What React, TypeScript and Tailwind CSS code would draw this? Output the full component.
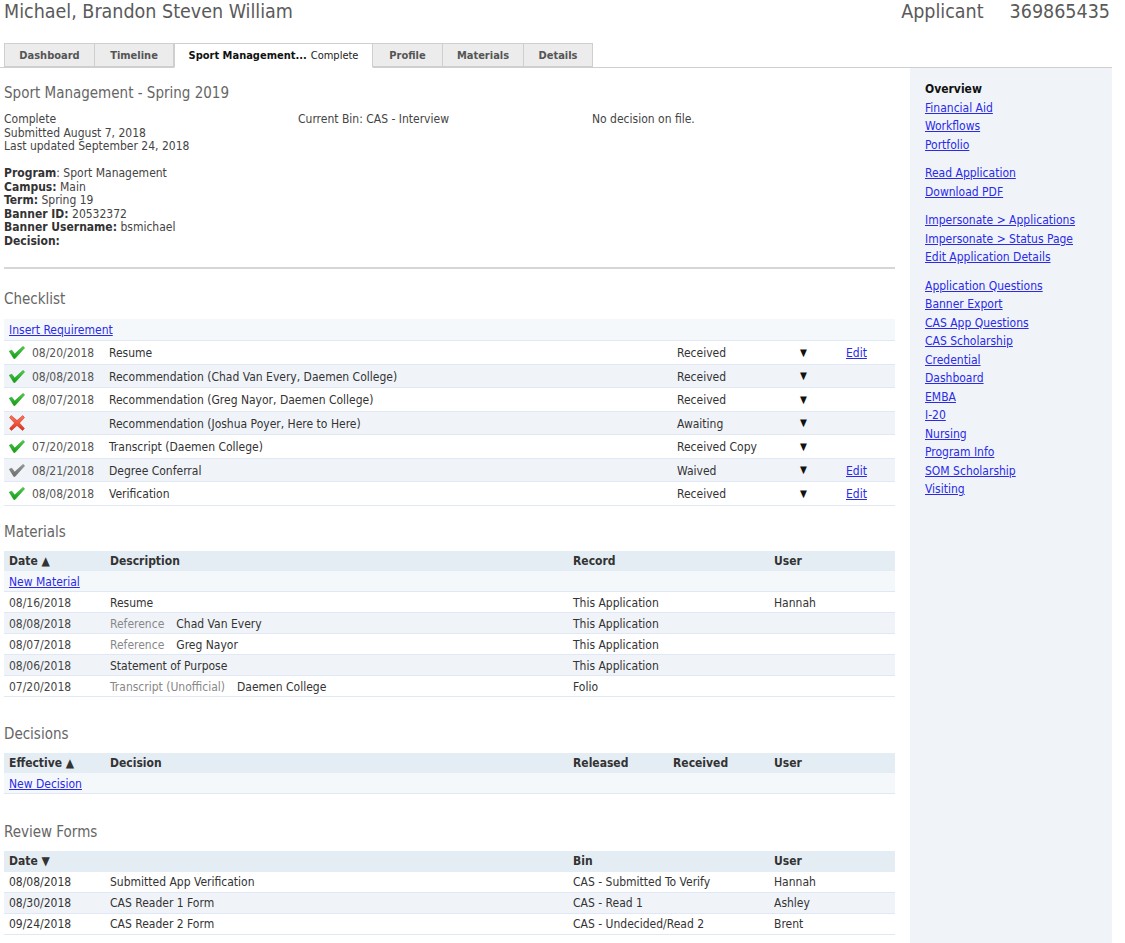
import React from "react";

const FONT = "font-['DejaVu_Sans_Condensed','Liberation_Sans',sans-serif]";
const LINK = "text-[#2a2ae8] underline";

function Check({ gray = false }: { gray?: boolean }) {
  const id = gray ? "gck" : "ck";
  return (
    <svg width="16" height="13" viewBox="0 0 16 13">
      <defs>
        <linearGradient id={id} x1="0" y1="0" x2="0" y2="1">
          <stop offset="0" stopColor={gray ? "#9a9a9a" : "#4cd44c"} />
          <stop offset="1" stopColor={gray ? "#6a6a6a" : "#139a13"} />
        </linearGradient>
      </defs>
      <path
        d="M0.3 5.2 L2.8 4.2 L5.6 8 L14 0.4 L15.6 1.8 L6 12.6 L4.8 12.6 Z"
        fill={`url(#${id})`}
        stroke={gray ? "#666" : "#118811"}
        strokeWidth="0.5"
        strokeLinejoin="round"
      />
    </svg>
  );
}

function Cross() {
  return (
    <svg width="16" height="16" viewBox="0 0 16 16">
      <defs>
        <linearGradient id="rx" x1="0" y1="0" x2="0" y2="1">
          <stop offset="0" stopColor="#ff7a5c" />
          <stop offset="1" stopColor="#e0301c" />
        </linearGradient>
      </defs>
      <path
        d="M2.2 0.6 L8 5.6 L13.8 0.6 L15.4 2.6 L10.4 8 L15.4 13.4 L13.6 15.4 L8 10.4 L2.4 15.4 L0.6 13.4 L5.6 8 L0.6 2.6 Z"
        fill="url(#rx)"
        stroke="#c8301c"
        strokeWidth="0.6"
        strokeLinejoin="round"
      />
    </svg>
  );
}

const checklist = [
  { icon: "g", date: "08/20/2018", desc: "Resume", status: "Received", edit: true },
  { icon: "g", date: "08/08/2018", desc: "Recommendation (Chad Van Every, Daemen College)", status: "Received", edit: false },
  { icon: "g", date: "08/07/2018", desc: "Recommendation (Greg Nayor, Daemen College)", status: "Received", edit: false },
  { icon: "x", date: "", desc: "Recommendation (Joshua Poyer, Here to Here)", status: "Awaiting", edit: false },
  { icon: "g", date: "07/20/2018", desc: "Transcript (Daemen College)", status: "Received Copy", edit: false },
  { icon: "k", date: "08/21/2018", desc: "Degree Conferral", status: "Waived", edit: true },
  { icon: "g", date: "08/08/2018", desc: "Verification", status: "Received", edit: true },
];

const materials = [
  { date: "08/16/2018", type: "", desc: "Resume", record: "This Application", user: "Hannah" },
  { date: "08/08/2018", type: "Reference", desc: "Chad Van Every", record: "This Application", user: "" },
  { date: "08/07/2018", type: "Reference", desc: "Greg Nayor", record: "This Application", user: "" },
  { date: "08/06/2018", type: "", desc: "Statement of Purpose", record: "This Application", user: "" },
  { date: "07/20/2018", type: "Transcript (Unofficial)", desc: "Daemen College", record: "Folio", user: "" },
];

const reviews = [
  { date: "08/08/2018", desc: "Submitted App Verification", bin: "CAS - Submitted To Verify", user: "Hannah" },
  { date: "08/30/2018", desc: "CAS Reader 1 Form", bin: "CAS - Read 1", user: "Ashley" },
  { date: "09/24/2018", desc: "CAS Reader 2 Form", bin: "CAS - Undecided/Read 2", user: "Brent" },
];

const sideGroups: string[][] = [
  ["Financial Aid", "Workflows", "Portfolio"],
  ["Read Application", "Download PDF"],
  ["Impersonate > Applications", "Impersonate > Status Page", "Edit Application Details"],
  [
    "Application Questions",
    "Banner Export",
    "CAS App Questions",
    "CAS Scholarship",
    "Credential",
    "Dashboard",
    "EMBA",
    "I-20",
    "Nursing",
    "Program Info",
    "SOM Scholarship",
    "Visiting",
  ],
];

const tabs = [
  { label: "Dashboard", w: "w-[91px]" },
  { label: "Timeline", w: "w-[79px]" },
  { label: "Sport", w: "w-[199px]", active: true },
  { label: "Profile", w: "w-[70px]" },
  { label: "Materials", w: "w-[81px]" },
  { label: "Details", w: "w-[69px]" },
];

function SectionTitle({ children, mt }: { children: React.ReactNode; mt: string }) {
  return <div className={`${mt} text-[15px] leading-[18px] text-[#666]`}>{children}</div>;
}

export default function App() {
  return (
    <div className={`${FONT} w-[1125px] h-[943px] bg-white overflow-hidden text-[12px] text-[#333]`}>
      <div className="w-[1112px]">
        {/* Header */}
        <div className="h-[43px] flex justify-between items-start pl-[4px] pr-[2px]">
          <div className="text-[19.5px] leading-[23px] text-[#5a5a5a]">Michael, Brandon Steven William</div>
          <div className="flex gap-[26px] text-[19.5px] leading-[23px] text-[#5a5a5a]">
            <span>Applicant</span>
            <span>369865435</span>
          </div>
        </div>

        {/* Tabs */}
        <div className="h-[25px] flex pl-[4px] border-b border-[#cfcfcf]">
          {tabs.map((t) =>
            t.active ? (
              <div
                key={t.label}
                className={`${t.w} h-[25px] bg-white border border-[#cfcfcf] border-b-white flex items-center justify-center gap-[4px] text-[11px] pt-[2px]`}
              >
                <span className="font-bold text-[#111]">Sport Management...</span>
                <span className="text-[#222]">Complete</span>
              </div>
            ) : (
              <div
                key={t.label}
                className={`${t.w} h-[24px] bg-[#ececec] border border-[#cfcfcf] border-l-0 first:border-l flex items-center justify-center text-[11px] font-bold text-[#555] pt-[2px]`}
              >
                {t.label}
              </div>
            )
          )}
        </div>

        {/* Body */}
        <div className="flex">
          {/* Main */}
          <div className="w-[891px] ml-[4px] pt-[16px]">
            <div className="text-[15px] leading-[18px] text-[#666]">Sport Management - Spring 2019</div>
            <div className="mt-[11px] grid grid-cols-[294px_294px_1fr] leading-[13.5px] text-[#444]">
              <div>
                <div>Complete</div>
                <div>Submitted August 7, 2018</div>
                <div>Last updated September 24, 2018</div>
                <div className="h-[13.5px]" />
                <div>
                  <b className="text-[#333]">Program</b>: Sport Management
                </div>
                <div>
                  <b className="text-[#333]">Campus:</b> Main
                </div>
                <div>
                  <b className="text-[#333]">Term:</b> Spring 19
                </div>
                <div>
                  <b className="text-[#333]">Banner ID:</b> 20532372
                </div>
                <div>
                  <b className="text-[#333]">Banner Username:</b> bsmichael
                </div>
                <div>
                  <b className="text-[#333]">Decision:</b>
                </div>
              </div>
              <div>Current Bin: CAS - Interview</div>
              <div>No decision on file.</div>
            </div>
            <div className="mt-[19px] h-[2px] bg-[#d6d6d6]" />

            {/* Checklist */}
            <SectionTitle mt="mt-[21px]">Checklist</SectionTitle>
            <div className="mt-[11px]">
              <div className="h-[22px] bg-[#f4f8fb] border-b border-[#dfe8f4] flex items-center pl-[5px] pt-[1px]">
                <span className={LINK}>Insert Requirement</span>
              </div>
              {checklist.map((r, i) => (
                <div
                  key={i}
                  className={`h-[23.5px] border-b border-[#dfe8f4] grid grid-cols-[23px_77px_568px_123px_46px_1fr] items-center pl-[5px] pt-[2px] ${
                    i % 2 === 1 ? "bg-[#f0f4f9]" : "bg-white"
                  }`}
                >
                  <div className="flex items-center -mt-[1px]">
                    {r.icon === "x" ? <Cross /> : <Check gray={r.icon === "k"} />}
                  </div>
                  <div className="text-[#555]">{r.date}</div>
                  <div>{r.desc}</div>
                  <div>{r.status}</div>
                  <div className="text-[10px] text-[#111] -mt-[2px]">▼</div>
                  <div>{r.edit ? <span className={LINK}>Edit</span> : null}</div>
                </div>
              ))}
            </div>

            {/* Materials */}
            <SectionTitle mt="mt-[17px]">Materials</SectionTitle>
            <div className="mt-[10px]">
              <div className="h-[20px] bg-[#e5edf4] grid grid-cols-[101px_463px_201px_1fr] items-center pl-[5px] font-bold">
                <div>Date ▲</div>
                <div>Description</div>
                <div>Record</div>
                <div>User</div>
              </div>
              <div className="h-[21px] bg-[#f4f8fb] border-b border-[#dfe8f4] flex items-center pl-[5px] pt-[2px]">
                <span className={LINK}>New Material</span>
              </div>
              {materials.map((m, i) => (
                <div
                  key={i}
                  className={`h-[21px] border-b border-[#dfe8f4] grid grid-cols-[101px_463px_201px_1fr] items-center pl-[5px] pt-[2px] ${
                    i % 2 === 1 ? "bg-[#f0f4f9]" : "bg-white"
                  }`}
                >
                  <div className="text-[#444]">{m.date}</div>
                  <div className="flex gap-[12px]">
                    {m.type ? <span className="text-[#888]">{m.type}</span> : null}
                    <span>{m.desc}</span>
                  </div>
                  <div>{m.record}</div>
                  <div>{m.user}</div>
                </div>
              ))}
            </div>

            {/* Decisions */}
            <SectionTitle mt="mt-[28px]">Decisions</SectionTitle>
            <div className="mt-[10px]">
              <div className="h-[20px] bg-[#e5edf4] grid grid-cols-[101px_463px_100px_101px_1fr] items-center pl-[5px] font-bold">
                <div>Effective ▲</div>
                <div>Decision</div>
                <div>Released</div>
                <div>Received</div>
                <div>User</div>
              </div>
              <div className="h-[21px] bg-[#f4f8fb] border-b border-[#dfe8f4] flex items-center pl-[5px] pt-[2px]">
                <span className={LINK}>New Decision</span>
              </div>
            </div>

            {/* Review Forms */}
            <SectionTitle mt="mt-[29px]">Review Forms</SectionTitle>
            <div className="mt-[10px]">
              <div className="h-[21px] bg-[#e5edf4] grid grid-cols-[101px_463px_201px_1fr] items-center pl-[5px] font-bold">
                <div>Date ▼</div>
                <div></div>
                <div>Bin</div>
                <div>User</div>
              </div>
              {reviews.map((r, i) => (
                <div
                  key={i}
                  className={`h-[21px] border-b border-[#dfe8f4] grid grid-cols-[101px_463px_201px_1fr] items-center pl-[5px] pt-[1px] ${
                    i % 2 === 1 ? "bg-[#f0f4f9]" : "bg-white"
                  }`}
                >
                  <div>{r.date}</div>
                  <div>{r.desc}</div>
                  <div>{r.bin}</div>
                  <div>{r.user}</div>
                </div>
              ))}
            </div>
          </div>

          {/* Sidebar */}
          <div className="ml-[15px] w-[202px] h-[875px] bg-[#f0f4f8] pl-[15px] pt-[12px] leading-[18.5px]">
            <div className="font-bold text-[#111]">Overview</div>
            <div className="flex flex-col gap-[10px]">
              {sideGroups.map((g, gi) => (
                <div key={gi} className="flex flex-col">
                  {g.map((l) => (
                    <span key={l} className={LINK}>
                      {l}
                    </span>
                  ))}
                </div>
              ))}
            </div>
          </div>
        </div>
      </div>
    </div>
  );
}
